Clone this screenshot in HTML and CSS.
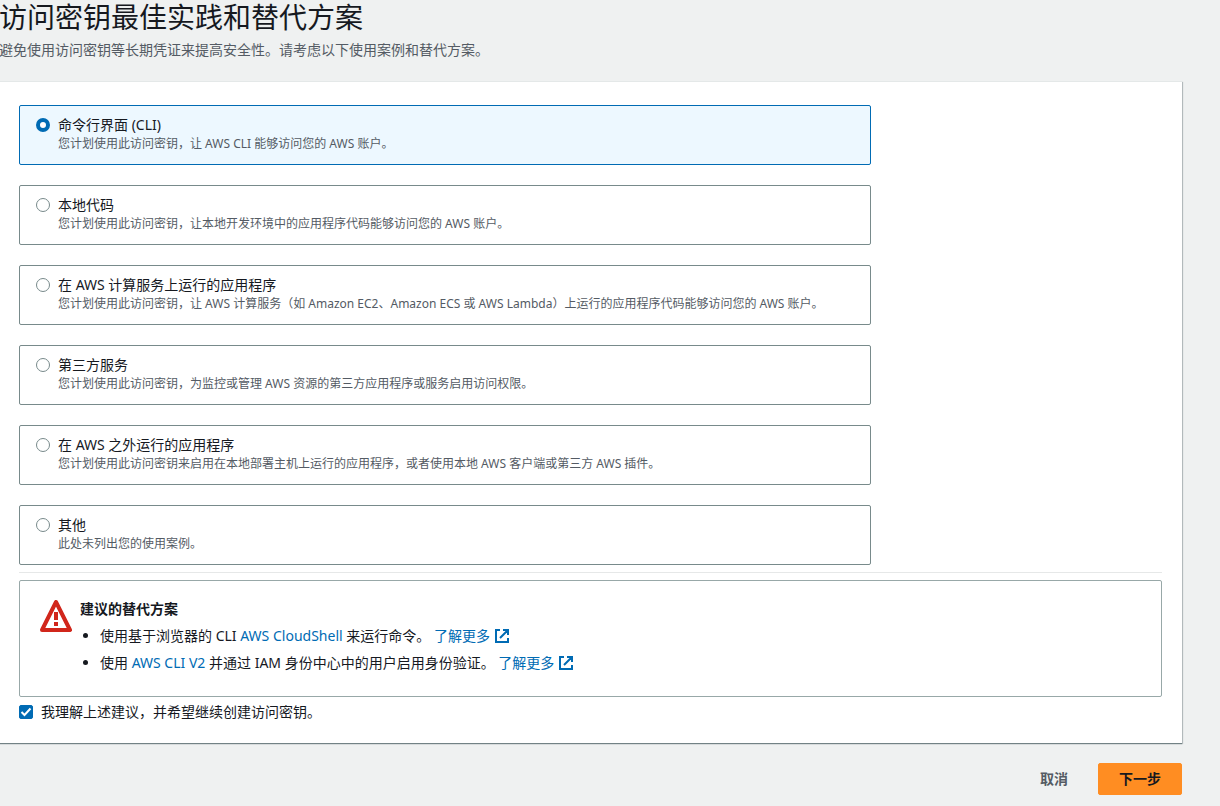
FILE: index.html
```html
<!DOCTYPE html>
<html lang="zh-CN">
<head>
<meta charset="utf-8">
<meta name="viewport" content="width=device-width, initial-scale=1">
<title>访问密钥最佳实践和替代方案</title>
<link rel="stylesheet" href="styles.css">
</head>
<body>
<main class="page">
  <header class="page-header">
    <h1 class="page-title">访问密钥最佳实践和替代方案</h1>
    <p class="page-description">避免使用访问密钥等长期凭证来提高安全性。请考虑以下使用案例和替代方案。</p>
  </header>
  <form class="form">
    <div class="panel">
      <div class="tiles" role="radiogroup" aria-label="使用案例">
        <label class="tile">
          <input class="radio" type="radio" name="usecase" checked>
          <span class="tile-text"><span class="tile-label">命令行界面 (CLI)</span><span class="tile-description">您计划使用此访问密钥，让 AWS CLI 能够访问您的 AWS 账户。</span></span>
        </label>
        <label class="tile">
          <input class="radio" type="radio" name="usecase">
          <span class="tile-text"><span class="tile-label">本地代码</span><span class="tile-description">您计划使用此访问密钥，让本地开发环境中的应用程序代码能够访问您的 AWS 账户。</span></span>
        </label>
        <label class="tile">
          <input class="radio" type="radio" name="usecase">
          <span class="tile-text"><span class="tile-label">在 AWS 计算服务上运行的应用程序</span><span class="tile-description">您计划使用此访问密钥，让 AWS 计算服务（如 Amazon EC2、Amazon ECS 或 AWS Lambda）上运行的应用程序代码能够访问您的 AWS 账户。</span></span>
        </label>
        <label class="tile">
          <input class="radio" type="radio" name="usecase">
          <span class="tile-text"><span class="tile-label">第三方服务</span><span class="tile-description">您计划使用此访问密钥，为监控或管理 AWS 资源的第三方应用程序或服务启用访问权限。</span></span>
        </label>
        <label class="tile">
          <input class="radio" type="radio" name="usecase">
          <span class="tile-text"><span class="tile-label">在 AWS 之外运行的应用程序</span><span class="tile-description">您计划使用此访问密钥来启用在本地部署主机上运行的应用程序，或者使用本地 AWS 客户端或第三方 AWS 插件。</span></span>
        </label>
        <label class="tile">
          <input class="radio" type="radio" name="usecase">
          <span class="tile-text"><span class="tile-label">其他</span><span class="tile-description">此处未列出您的使用案例。</span></span>
        </label>
      </div>
      <hr class="divider">
      <section class="alert">
        <svg class="alert-icon" viewBox="0 0 32 32" aria-hidden="true">
          <path d="M16 2 30 30H2Z" fill="none" stroke="#d1261b" stroke-width="4" stroke-linejoin="round"/>
          <path d="M16 12v8M16 22v4" fill="none" stroke="#d1261b" stroke-width="4"/>
        </svg>
        <div class="alert-body">
          <h2 class="alert-title">建议的替代方案</h2>
          <ul class="alert-list">
            <li>使用基于浏览器的 CLI <a class="link" href="#">AWS CloudShell</a> 来运行命令。 <a class="link" href="#">了解更多 <svg class="external" viewBox="0 0 16 16" aria-hidden="true"><path d="M6 2H2v12h12v-4M9 2h5v5M6 10l8-8"/></svg></a></li>
            <li>使用 <a class="link" href="#">AWS CLI V2</a> 并通过 IAM 身份中心中的用户启用身份验证。 <a class="link" href="#">了解更多 <svg class="external" viewBox="0 0 16 16" aria-hidden="true"><path d="M6 2H2v12h12v-4M9 2h5v5M6 10l8-8"/></svg></a></li>
          </ul>
        </div>
      </section>
      <label class="confirm">
        <input class="checkbox" type="checkbox" checked>
        <span>我理解上述建议，并希望继续创建访问密钥。</span>
      </label>
    </div>
    <footer class="actions">
      <button class="button" type="button">取消</button>
      <button class="button button-primary" type="button">下一步</button>
    </footer>
  </form>
</main>
</body>
</html>
```
FILE: styles.css
```css
* {
  box-sizing: border-box;
}

body {
  margin: 0;
  background: #eff1f1;
  color: #16191f;
  font: 14px/22px "Noto Sans", "Noto Sans CJK SC", sans-serif;
}

.page {
  margin: 0 38px 0 -1px;
}

.page-header {
  padding-bottom: 20px;
}

.page-title {
  margin: 0;
  padding-bottom: 5px;
  font-size: 28px;
  font-weight: 400;
  line-height: 34px;
}

.page-description {
  margin: 0;
  color: #545b64;
}

.panel {
  padding: 23px 20px 16px;
  border-top: 1px solid #e4e8e8;
  background: #fff;
  box-shadow: 0 1px 1px 0 rgba(0, 28, 36, 0.4), 1px 1px 1px 0 rgba(0, 28, 36, 0.2);
}

.tiles {
  display: grid;
  gap: 20px;
  max-width: 852px;
}

.tile {
  display: flex;
  gap: 8px;
  min-height: 60px;
  padding: 8px 16px;
  border: 1px solid #788a8b;
  border-radius: 2px;
  background: #fff;
}

.tile:has(.radio:checked) {
  border-color: #006bb4;
  background: #edf8ff;
}

.radio {
  flex: none;
  appearance: none;
  width: 14px;
  height: 14px;
  margin: 4px 0;
  border: 1px solid #788a8b;
  border-radius: 50%;
  background: #fff;
}

.radio:checked {
  border: 4px solid #006bb4;
}

.tile-text {
  display: flex;
  flex-direction: column;
}

.tile-description {
  color: #545b64;
  font-size: 12px;
  line-height: 16px;
}

.divider {
  height: 1px;
  margin: 7px 0;
  border: 0;
  background: #e6e8e8;
}

.alert {
  display: flex;
  gap: 8px;
  padding: 17px 20px 17px;
  border: 1px solid #98a8a8;
  border-radius: 2px;
}

.alert-icon {
  flex: none;
  width: 32px;
  height: 32px;
  margin-top: 2px;
}

.alert-title {
  margin: 0;
  font-size: 14px;
  font-weight: 700;
}

.alert-list {
  display: grid;
  gap: 5px;
  margin: 5px 0;
  padding-left: 20px;
}

.link {
  color: #006bb4;
  text-decoration: none;
}

.external {
  width: 16px;
  height: 16px;
  vertical-align: -3px;
  fill: none;
  stroke: currentColor;
  stroke-width: 2;
}

.confirm {
  display: flex;
  align-items: center;
  gap: 8px;
  margin: 4px 0;
}

.checkbox {
  flex: none;
  appearance: none;
  width: 14px;
  height: 14px;
  margin: 0;
  border: 1px solid #788a8b;
  border-radius: 2px;
}

.checkbox:checked {
  border-color: #006bb4;
  background: #006bb4 url("data:image/svg+xml,%3Csvg xmlns='http://www.w3.org/2000/svg' viewBox='0 0 12 12'%3E%3Cpath d='M1.500 6l3 3 6-6.500' fill='none' stroke='white' stroke-width='2'/%3E%3C/svg%3E") center / 12px 12px;
}

.actions {
  display: flex;
  justify-content: flex-end;
  gap: 9px;
  padding: 20px 0 11px;
}

.button {
  padding: 4px 20px;
  border: 1px solid transparent;
  border-radius: 2px;
  background: transparent;
  color: #545b64;
  font: inherit;
  font-weight: 700;
}

.button-primary {
  border-color: #ff8d22;
  background: #ff8d22;
  color: #16191f;
}
```
